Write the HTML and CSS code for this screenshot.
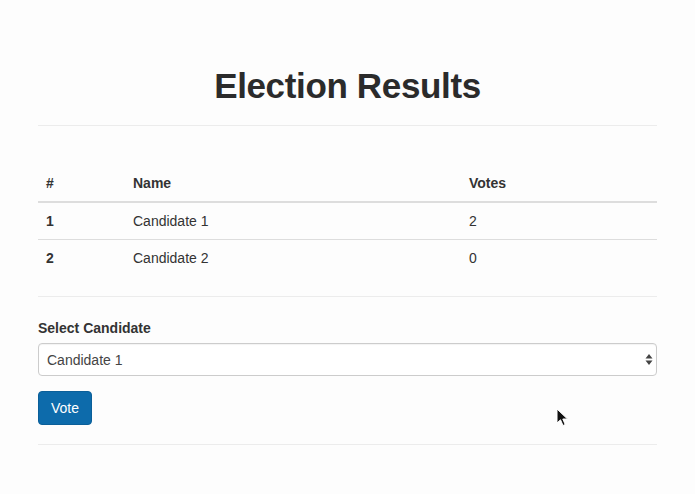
FILE: index.html
```html
<!DOCTYPE html>
<html>
<head>
<meta charset="utf-8">
<link rel="stylesheet" href="styles.css">
</head>
<body>
<div class="page">
  <h1 class="title">Election Results</h1>
  <hr class="rule rule-top">
  <table class="results">
    <thead>
      <tr><th class="c-num">#</th><th class="c-name">Name</th><th class="c-votes">Votes</th></tr>
    </thead>
    <tbody>
      <tr><th class="c-num">1</th><td>Candidate 1</td><td>2</td></tr>
      <tr><th class="c-num">2</th><td>Candidate 2</td><td>0</td></tr>
    </tbody>
  </table>
  <hr class="rule rule-mid">
  <form class="vote-form">
    <label class="label" for="cand">Select Candidate</label>
    <div class="select-wrap">
      <select id="cand" class="select">
        <option>Candidate 1</option>
        <option>Candidate 2</option>
      </select>
      <svg class="select-arrows" width="8" height="13" viewBox="0 0 8 13"><path d="M4 1 L7.5 5.5 H0.5 Z M4 12 L7.5 7.5 H0.5 Z" fill="#444"/></svg>
    </div>
    <button type="button" class="btn">Vote</button>
  </form>
  <hr class="rule rule-bottom">
</div>
<svg class="cursor" width="14" height="20" viewBox="0 0 14 20"><path d="M1 1 L1 15 L4.5 11.8 L7 17.5 L9.2 16.5 L6.8 11 L11.5 11 Z" fill="#111" stroke="#fff" stroke-width="1"/></svg>
</body>
</html>
```
FILE: styles.css
```css
html, body {
  margin: 0;
  padding: 0;
  background: #fdfdfd;
}
body {
  font-family: "Liberation Sans", Arial, Helvetica, sans-serif;
  font-size: 14px;
  line-height: 20px;
  color: #333;
  position: relative;
  min-height: 494px;
}
.page {
  padding: 0 38px;
}
.title {
  margin: 66px 0 0;
  font-size: 35px;
  line-height: 40px;
  font-weight: 600;
  text-align: center;
  color: #2b2b2b;
  letter-spacing: -0.35px;
}
.rule {
  border: 0;
  border-top: 1px solid #ececec;
  margin: 0;
  height: 0;
}
.rule-top { margin-top: 19px; }
.results {
  width: 100%;
  border-collapse: collapse;
  margin-top: 39px;
}
.results th, .results td {
  padding: 8px;
  text-align: left;
  line-height: 20px;
}
.results thead th {
  border-bottom: 2px solid #ddd;
  font-weight: bold;
}
.results tbody tr + tr th, .results tbody tr + tr td {
  border-top: 1px solid #ddd;
}
.results tbody th { font-weight: bold; }
.results td { font-weight: normal; }
.c-num { width: 71px; }
.c-name { width: 320px; }
.rule-mid { margin-top: 20px; }
.vote-form {
  display: flex;
  flex-direction: column;
  align-items: flex-start;
  padding-top: 21px;
}
.label {
  font-weight: bold;
  margin-bottom: 5px;
}
.select-wrap {
  position: relative;
  width: 100%;
}
.select {
  appearance: none;
  -webkit-appearance: none;
  width: 100%;
  height: 33px;
  box-sizing: border-box;
  border: 1px solid #ccc;
  border-radius: 4px;
  background: #fff;
  padding: 0 8px;
  font-family: inherit;
  font-size: 14px;
  color: #444;
  box-shadow: inset 0 1px 1px rgba(0,0,0,0.05);
}
.select-arrows {
  position: absolute;
  right: 4px;
  top: 10px;
  pointer-events: none;
}
.btn {
  margin-top: 15px;
  background: #0d6bab;
  color: #fff;
  border: 1px solid #0b5f99;
  border-radius: 4px;
  padding: 0 12px;
  height: 34px;
  font-family: inherit;
  font-size: 14px;
}
.rule-bottom { margin-top: 19px; }
.cursor {
  position: absolute;
  left: 556px;
  top: 408px;
}
```
